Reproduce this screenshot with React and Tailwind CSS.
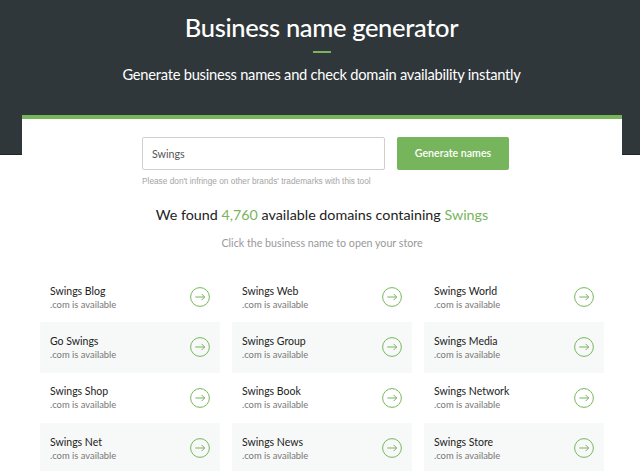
const rows = [
  ["Swings Blog", "Swings Web", "Swings World"],
  ["Go Swings", "Swings Group", "Swings Media"],
  ["Swings Shop", "Swings Book", "Swings Network"],
  ["Swings Net", "Swings News", "Swings Store"],
];

function Arrow() {
  return (
    <svg width="20" height="20" viewBox="0 0 20 20" fill="none" stroke="#77b55d" strokeWidth="1" className="shrink-0">
      <circle cx="10" cy="10" r="9.4" />
      <path d="M5.3 10H14.7M11.6 6.9L14.7 10L11.6 13.1" />
    </svg>
  );
}

export default function App() {
  return (
    <div className="h-[471px] w-[640px] overflow-hidden bg-white font-['Lato',sans-serif]">
      <header className="h-[155px] border-b border-[#1f2528] bg-[#30373b] pl-[3px] text-center text-white">
        <h1 className="pt-[9px] text-[25.5px] leading-[36px] font-medium tracking-[-0.35px]">Business name generator</h1>
        <div className="mx-auto mt-[6px] h-[2px] w-[18px] bg-[#77b55d]" />
        <p className="mt-[9px] text-[14.7px] leading-[24px] tracking-[-0.25px]">Generate business names and check domain availability instantly</p>
      </header>
      <main className="relative mx-[22px] -mt-[40px] h-[400px] w-[600px] border-t-4 border-[#77b55d] bg-white">
        <div className="ml-[120px] flex gap-3 pt-[18px]">
          <div className="flex h-[33px] w-[243px] items-center rounded-[2px] border border-[#cfcfcf] pt-px pl-[9px] text-[10.7px] text-[#555]">Swings</div>
          <button className="h-[33px] w-[112px] rounded-[2px] bg-[#77b55d] pt-px text-[10.6px] font-semibold text-white">Generate names</button>
        </div>
        <p className="mt-[5px] ml-[120px] font-['Liberation_Sans',sans-serif] text-[8.3px] leading-[12px] text-[#a5a5a5]">Please don't infringe on other brands' trademarks with this tool</p>
        <p className="mt-[18px] text-center text-[14.3px] leading-[20px] text-[#222]">
          We found <span className="text-[#77b55d]">4,760</span> available domains containing <span className="text-[#77b55d]">Swings</span>
        </p>
        <p className="mt-[10px] text-center text-[10.7px] leading-[16px] text-[#999]">Click the business name to open your store</p>
        <div className="mt-[21px] ml-[18px] flex w-[564px] flex-col">
          {rows.map((row, r) => (
            <div key={r} className="flex h-[50.3px] gap-3">
              {row.map((name) => (
                <div key={name} className={`flex w-[180px] items-center justify-between pr-[10px] pl-[10px] ${r % 2 ? "bg-[#f7f9f8]" : "bg-white"}`}>
                  <div>
                    <div className="text-[10.5px] leading-[14px] text-[#222]">{name}</div>
                    <div className="text-[9.4px] leading-[13px] text-[#777]">.com is available</div>
                  </div>
                  <Arrow />
                </div>
              ))}
            </div>
          ))}
        </div>
      </main>
    </div>
  );
}
